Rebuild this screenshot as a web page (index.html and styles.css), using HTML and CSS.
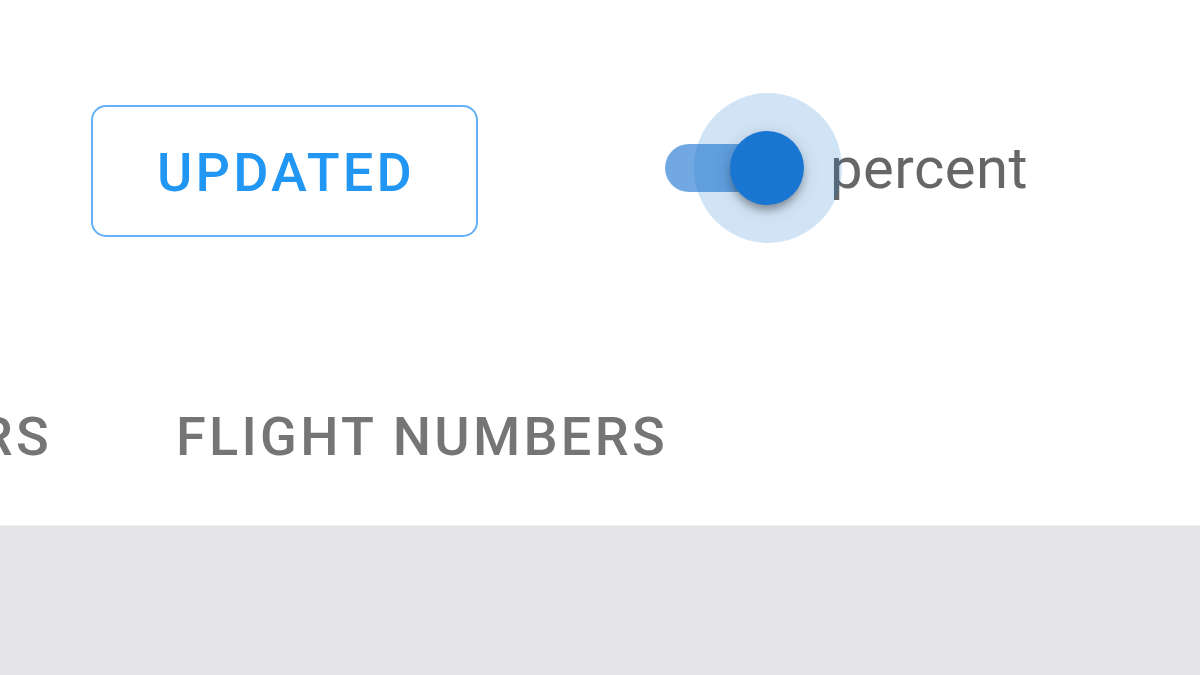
FILE: index.html
```html
<!DOCTYPE html>
<html lang="en">
<head>
<meta charset="utf-8">
<title>Flights</title>
<link rel="stylesheet" href="styles.css">
</head>
<body>
<div class="page">
  <div class="toolbar">
    <button class="btn-outlined">UPDATED</button>
    <label class="switch-label">
      <span class="switch">
        <span class="track"></span>
        <span class="halo"></span>
        <span class="thumb"></span>
      </span>
      <span class="label-text">percent</span>
    </label>
  </div>
  <div class="tabs">
    <div class="tab tab-clipped"><span>RS</span></div>
    <div class="tab">FLIGHT NUMBERS</div>
  </div>
  <div class="content"></div>
</div>
</body>
</html>
```
FILE: styles.css
```css
html, body {
  margin: 0;
  padding: 0;
  background: #ffffff;
  font-family: Roboto, "Liberation Sans", sans-serif;
}
.page {
  width: 1200px;
  height: 675px;
  overflow: hidden;
  display: flex;
  flex-direction: column;
}
.toolbar {
  display: flex;
  align-items: center;
  padding-top: 105px;
  padding-left: 91px;
  height: 132px;
}
.btn-outlined {
  box-sizing: border-box;
  width: 387px;
  height: 132px;
  border: 2px solid #62b0f6;
  border-radius: 15px;
  background: #fff;
  color: #2196f3;
  font-family: Roboto, "Liberation Sans", sans-serif;
  font-weight: 500;
  font-size: 54px;
  letter-spacing: 3.2px;
  padding: 0;
  padding-top: 2px;
  padding-left: 3px;
  margin: 0;
}
.switch-label {
  display: flex;
  align-items: center;
  margin-left: 187px;
  margin-top: -6px;
}
.switch {
  position: relative;
  width: 165px;
  height: 150px;
  flex: none;
}
.track {
  position: absolute;
  left: 0;
  top: 51px;
  width: 128px;
  height: 48px;
  border-radius: 24px;
  background: #72a8e2;
}
.halo {
  position: absolute;
  left: 29px;
  top: 0;
  width: 148px;
  height: 150px;
  border-radius: 50%;
  background: rgba(25, 118, 210, 0.2);
}
.thumb {
  position: absolute;
  left: 65px;
  top: 38px;
  width: 74px;
  height: 74px;
  border-radius: 50%;
  background: #1976d2;
  box-shadow: 0 8px 8px -4px rgba(0,0,0,0.25), 0 4px 10px 0 rgba(0,0,0,0.14), 0 4px 20px 0 rgba(0,0,0,0.12);
}
.label-text {
  font-size: 58px;
  color: #666666;
  letter-spacing: 0.5px;
}
.tabs {
  display: flex;
  align-items: center;
  margin-top: 145px;
  height: 94px;
}
.tab {
  font-weight: 500;
  font-size: 54px;
  letter-spacing: 3.3px;
  color: #757575;
  white-space: nowrap;
  padding-top: 14px;
}
.tab-clipped {
  width: 52px;
  display: flex;
  justify-content: flex-end;
  margin-right: 124px;
}
.tab-clipped span {
  flex: none;
}
.content {
  flex: 1;
  margin-top: 49px;
  background: #e4e4e6;
  border-top: 1px solid #ececee;
}
```
